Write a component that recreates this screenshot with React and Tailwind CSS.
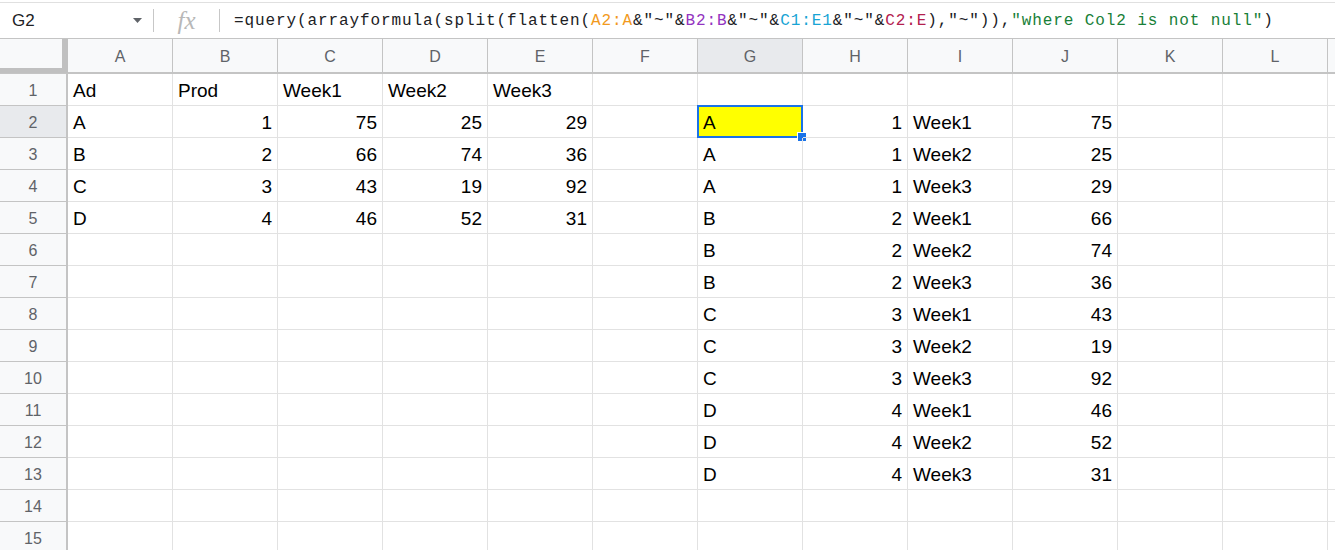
import React from "react";

const COLS = ["A", "B", "C", "D", "E", "F", "G", "H", "I", "J", "K", "L", ""];

const left = [
  ["Ad", "Prod", "Week1", "Week2", "Week3"],
  ["A", 1, 75, 25, 29],
  ["B", 2, 66, 74, 36],
  ["C", 3, 43, 19, 92],
  ["D", 4, 46, 52, 31],
];

const right = [];
["A", "B", "C", "D"].forEach((ad, i) => {
  ["Week1", "Week2", "Week3"].forEach((w, j) => {
    right.push([ad, i + 1, w, left[i + 1][j + 2]]);
  });
});

// build 15 rows x 13 columns of values
const grid = Array.from({ length: 15 }, (_, r) => {
  const row = Array(13).fill("");
  if (left[r]) left[r].forEach((v, c) => (row[c] = v));
  if (r >= 1 && right[r - 1]) right[r - 1].forEach((v, c) => (row[6 + c] = v));
  return row;
});

function Formula() {
  return (
    <span className="text-[#202124]">
      =query(arrayformula(split(flatten(
      <span className="text-[#f29a1d]">A2:A</span>&"~"&
      <span className="text-[#9334c0]">B2:B</span>&"~"&
      <span className="text-[#18a4d4]">C1:E1</span>&"~"&
      <span className="text-[#b3204e]">C2:E</span>),"~")),
      <span className="text-[#188038]">"where Col2 is not null"</span>)
    </span>
  );
}

export default function App() {
  return (
    <div className="w-[1335px] h-[550px] overflow-hidden bg-white font-['Liberation_Sans',Arial,sans-serif]">
      {/* FORMULA BAR */}
      <div className="pt-[2px]">
        <div className="h-[36px] border-t border-[#e0e0e0] flex items-center">
          <div className="w-[153px] h-full flex items-center justify-between pl-[12px] pr-[11px]">
            <span className="text-[17px] text-[#202124]">G2</span>
            <svg width="9" height="5" viewBox="0 0 9 5">
              <path d="M0 0h9L4.5 5z" fill="#5f6368" />
            </svg>
          </div>
          <div className="w-px h-[23px] bg-[#c7c7c7]" />
          <div className="w-[65px] h-full flex items-center justify-center">
            <span className="font-['Liberation_Serif',serif] italic text-[25px] text-[#b8b8b8] leading-none">
              fx
            </span>
          </div>
          <div className="w-px h-[23px] bg-[#c7c7c7]" />
          <div className="pl-[14px] font-['Liberation_Mono',monospace] text-[16px] tracking-[0.9px] whitespace-nowrap">
            <Formula />
          </div>
        </div>
      </div>

      {/* COLUMN HEADERS */}
      <div className="flex h-[36px] border-t border-[#c4c4c4] border-b-2 border-b-[#c4c4c4] bg-[#f8f9fa]">
        <div className="w-[68px] shrink-0 h-[34px] pr-[6px] pb-[5px] bg-[#c0c0c0]">
          <div className="w-full h-full bg-[#f8f9fa]" />
        </div>
        {COLS.map((c, i) => (
          <div
            key={i}
            className={`w-[105px] shrink-0 border-r border-[#c4c4c4] flex items-center justify-center pt-[2px] text-[16px] text-[#5f6368] ${
              c === "G" ? "bg-[#e8eaed]" : ""
            }`}
          >
            {c}
          </div>
        ))}
      </div>

      {/* ROWS */}
      {grid.map((row, r) => (
        <div key={r} className="flex h-[32px]">
          <div
            className={`w-[68px] shrink-0 border-r-2 border-b border-[#c4c4c4] flex items-center justify-center pt-[2px] text-[16px] text-[#5f6368] ${
              r === 1 ? "bg-[#e8eaed]" : "bg-[#f8f9fa]"
            }`}
          >
            {r + 1}
          </div>
          {row.map((v, c) => {
            const selected = r === 1 && c === 6;
            return (
              <div
                key={c}
                className={`relative w-[105px] shrink-0 border-r border-b border-[#e2e2e2] px-[5px] pt-[4px] flex items-center text-[19px] text-black whitespace-nowrap ${
                  typeof v === "number" ? "justify-end" : ""
                } ${selected ? "bg-[#ffff00]" : ""}`}
              >
                {v}
                {selected && (
                  <>
                    <div className="absolute -left-px -top-px -right-px -bottom-px border-2 border-[#1a73e8]" />
                    <div className="absolute -right-[5px] -bottom-[5px] w-[10px] h-[10px] bg-[#1a73e8] border border-white" />
                  </>
                )}
              </div>
            );
          })}
        </div>
      ))}
    </div>
  );
}
